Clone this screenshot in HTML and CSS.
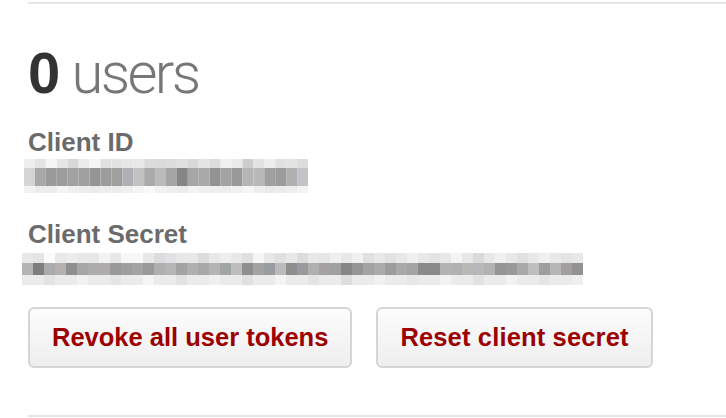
FILE: index.html
```html
<!DOCTYPE html>
<html>
<head>
<meta charset="utf-8">
<link rel="stylesheet" href="styles.css">
</head>
<body>
<div class="page">
  <div class="rule"></div>
  <h2 class="count"><span class="num">0</span> <span class="unit">users</span></h2>
  <dl class="creds">
    <dt class="label label-id">Client ID</dt>
    <dd class="blur blur-id">
      <svg width="284" height="34" viewBox="0 0 26 34" preserveAspectRatio="none">
        <g>
          <rect x="0" y="0" width="1" height="9" fill="#eeeeee"/><rect x="1" y="0" width="1" height="9" fill="#e3e3e3"/><rect x="2" y="0" width="1" height="9" fill="#f5f5f5"/><rect x="3" y="0" width="1" height="9" fill="#e5e5e5"/><rect x="4" y="0" width="1" height="9" fill="#d8d8d8"/><rect x="5" y="0" width="1" height="9" fill="#ebebeb"/><rect x="6" y="0" width="1" height="9" fill="#f5f5f5"/><rect x="7" y="0" width="1" height="9" fill="#e0e0e0"/><rect x="8" y="0" width="1" height="9" fill="#e2e2e2"/><rect x="9" y="0" width="1" height="9" fill="#e6e6e6"/><rect x="10" y="0" width="1" height="9" fill="#e8e8e8"/><rect x="11" y="0" width="1" height="9" fill="#dcdcdc"/><rect x="12" y="0" width="1" height="9" fill="#dadada"/><rect x="13" y="0" width="1" height="9" fill="#dcdcdc"/><rect x="14" y="0" width="1" height="9" fill="#e0e0e0"/><rect x="15" y="0" width="1" height="9" fill="#d9d9d9"/><rect x="16" y="0" width="1" height="9" fill="#e4e4e4"/><rect x="17" y="0" width="1" height="9" fill="#dcdcdc"/><rect x="18" y="0" width="1" height="9" fill="#f0f0f0"/><rect x="19" y="0" width="1" height="9" fill="#ebebeb"/><rect x="20" y="0" width="1" height="9" fill="#cdcdcd"/><rect x="21" y="0" width="1" height="9" fill="#e2e2e2"/><rect x="22" y="0" width="1" height="9" fill="#ededed"/><rect x="23" y="0" width="1" height="9" fill="#e0e0e0"/><rect x="24" y="0" width="1" height="9" fill="#e3e3e3"/><rect x="25" y="0" width="1" height="9" fill="#dddddd"/>
        </g>
        <g>
          <rect x="0" y="9" width="1" height="18" fill="#d5d5d5"/><rect x="1" y="9" width="1" height="18" fill="#a8a8a8"/><rect x="2" y="9" width="1" height="18" fill="#9a9a9a"/><rect x="3" y="9" width="1" height="18" fill="#9d9d9d"/><rect x="4" y="9" width="1" height="18" fill="#a2a2a2"/><rect x="5" y="9" width="1" height="18" fill="#a0a0a0"/><rect x="6" y="9" width="1" height="18" fill="#959595"/><rect x="7" y="9" width="1" height="18" fill="#9d9d9d"/><rect x="8" y="9" width="1" height="18" fill="#9f9f9f"/><rect x="9" y="9" width="1" height="18" fill="#b0b0b4"/><rect x="10" y="9" width="1" height="18" fill="#c2c2c2"/><rect x="11" y="9" width="1" height="18" fill="#aaaaaa"/><rect x="12" y="9" width="1" height="18" fill="#bbbbbb"/><rect x="13" y="9" width="1" height="18" fill="#a5a5a5"/><rect x="14" y="9" width="1" height="18" fill="#868686"/><rect x="15" y="9" width="1" height="18" fill="#a7a7a7"/><rect x="16" y="9" width="1" height="18" fill="#a9a9a9"/><rect x="17" y="9" width="1" height="18" fill="#939393"/><rect x="18" y="9" width="1" height="18" fill="#a3a3a3"/><rect x="19" y="9" width="1" height="18" fill="#999999"/><rect x="20" y="9" width="1" height="18" fill="#b5b5b8"/><rect x="21" y="9" width="1" height="18" fill="#b9b9b9"/><rect x="22" y="9" width="1" height="18" fill="#a0a0a0"/><rect x="23" y="9" width="1" height="18" fill="#9c9c9c"/><rect x="24" y="9" width="1" height="18" fill="#b0b0b0"/><rect x="25" y="9" width="1" height="18" fill="#c3c3c8"/>
        </g>
        <g>
          <rect x="0" y="27" width="1" height="7" fill="#f2f2f2"/><rect x="1" y="27" width="1" height="7" fill="#ececec"/><rect x="2" y="27" width="1" height="7" fill="#ececec"/><rect x="3" y="27" width="1" height="7" fill="#f5f5f5"/><rect x="4" y="27" width="1" height="7" fill="#efefef"/><rect x="5" y="27" width="1" height="7" fill="#ededed"/><rect x="6" y="27" width="1" height="7" fill="#eaeaea"/><rect x="7" y="27" width="1" height="7" fill="#ededed"/><rect x="8" y="27" width="1" height="7" fill="#ececec"/><rect x="9" y="27" width="1" height="7" fill="#f0f0f0"/><rect x="10" y="27" width="1" height="7" fill="#f4f4f4"/><rect x="11" y="27" width="1" height="7" fill="#fafafa"/><rect x="12" y="27" width="1" height="7" fill="#f1f1f1"/><rect x="13" y="27" width="1" height="7" fill="#eeeeee"/><rect x="14" y="27" width="1" height="7" fill="#ececec"/><rect x="15" y="27" width="1" height="7" fill="#f3f3f3"/><rect x="16" y="27" width="1" height="7" fill="#efefef"/><rect x="17" y="27" width="1" height="7" fill="#eeeeee"/><rect x="18" y="27" width="1" height="7" fill="#ededed"/><rect x="19" y="27" width="1" height="7" fill="#f0f0f0"/><rect x="20" y="27" width="1" height="7" fill="#f6f6f6"/><rect x="21" y="27" width="1" height="7" fill="#eeeeee"/><rect x="22" y="27" width="1" height="7" fill="#eaeaea"/><rect x="23" y="27" width="1" height="7" fill="#ececec"/><rect x="24" y="27" width="1" height="7" fill="#eeeeee"/><rect x="25" y="27" width="1" height="7" fill="#f3f3f3"/>
        </g>
      </svg>
    </dd>
    <dt class="label label-secret">Client Secret</dt>
    <dd class="blur blur-secret">
      <svg width="561" height="32" viewBox="0 0 51 32" preserveAspectRatio="none">
        <g>
          <rect x="0" y="0" width="51" height="10" fill="#e8e8e8"/>
          <rect x="1" y="0" width="1" height="10" fill="#e4e4e4"/><rect x="2" y="0" width="1" height="10" fill="#fbfbfb"/><rect x="4" y="0" width="1" height="10" fill="#ececec"/><rect x="7" y="0" width="1" height="10" fill="#f2f2f2"/><rect x="9" y="0" width="1" height="10" fill="#f7f7f7"/><rect x="10" y="0" width="1" height="10" fill="#f7f7f7"/><rect x="12" y="0" width="1" height="10" fill="#dcdcdc"/><rect x="13" y="0" width="1" height="10" fill="#e2e2e6"/><rect x="16" y="0" width="1" height="10" fill="#dcdcdc"/><rect x="18" y="0" width="1" height="10" fill="#eeeeee"/><rect x="20" y="0" width="1" height="10" fill="#e0e0e0"/><rect x="21" y="0" width="1" height="10" fill="#f5f5f5"/><rect x="23" y="0" width="1" height="10" fill="#e0e0e0"/><rect x="25" y="0" width="1" height="10" fill="#dcdcdc"/><rect x="27" y="0" width="1" height="10" fill="#e6e6e6"/><rect x="28" y="0" width="1" height="10" fill="#efefef"/><rect x="30" y="0" width="1" height="10" fill="#f0f0f0"/><rect x="31" y="0" width="1" height="10" fill="#e0e0e0"/><rect x="33" y="0" width="1" height="10" fill="#e2e2e2"/><rect x="35" y="0" width="1" height="10" fill="#f0f0f0"/><rect x="37" y="0" width="1" height="10" fill="#e3e3e3"/><rect x="39" y="0" width="1" height="10" fill="#f4f4f4"/><rect x="41" y="0" width="1" height="10" fill="#dadada"/><rect x="43" y="0" width="1" height="10" fill="#f0f0f0"/><rect x="45" y="0" width="1" height="10" fill="#e0e0e0"/><rect x="47" y="0" width="1" height="10" fill="#efefef"/><rect x="49" y="0" width="1" height="10" fill="#e4e4e4"/>
        </g>
        <g>
          <rect x="0" y="10" width="1" height="12" fill="#b4b4b4"/><rect x="1" y="10" width="1" height="12" fill="#7e7e7e"/><rect x="2" y="10" width="1" height="12" fill="#aaaaaf"/><rect x="3" y="10" width="1" height="12" fill="#b5b0b0"/><rect x="4" y="10" width="1" height="12" fill="#8e8e8e"/><rect x="5" y="10" width="1" height="12" fill="#a6a6a6"/><rect x="6" y="10" width="1" height="12" fill="#acacac"/><rect x="7" y="10" width="1" height="12" fill="#b0acac"/><rect x="8" y="10" width="1" height="12" fill="#999999"/><rect x="9" y="10" width="1" height="12" fill="#9e9e9e"/><rect x="10" y="10" width="1" height="12" fill="#a4a4a4"/><rect x="11" y="10" width="1" height="12" fill="#9a9a9a"/><rect x="12" y="10" width="1" height="12" fill="#afafaf"/><rect x="13" y="10" width="1" height="12" fill="#b5b5b5"/><rect x="14" y="10" width="1" height="12" fill="#a3a3a3"/><rect x="15" y="10" width="1" height="12" fill="#b0b0b0"/><rect x="16" y="10" width="1" height="12" fill="#a8a8a8"/><rect x="17" y="10" width="1" height="12" fill="#b4b4b4"/><rect x="18" y="10" width="1" height="12" fill="#a1a5a5"/><rect x="19" y="10" width="1" height="12" fill="#bdbdbd"/><rect x="20" y="10" width="1" height="12" fill="#8f8f8f"/><rect x="21" y="10" width="1" height="12" fill="#a3a3a3"/><rect x="22" y="10" width="1" height="12" fill="#989ca0"/><rect x="23" y="10" width="1" height="12" fill="#bbbbbb"/><rect x="24" y="10" width="1" height="12" fill="#8e8e8e"/><rect x="25" y="10" width="1" height="12" fill="#9a9a9e"/><rect x="26" y="10" width="1" height="12" fill="#b0b0b0"/><rect x="27" y="10" width="1" height="12" fill="#a6a2a2"/><rect x="28" y="10" width="1" height="12" fill="#a0a0a0"/><rect x="29" y="10" width="1" height="12" fill="#858585"/><rect x="30" y="10" width="1" height="12" fill="#959595"/><rect x="31" y="10" width="1" height="12" fill="#a3a3a3"/><rect x="32" y="10" width="1" height="12" fill="#aaaaaa"/><rect x="33" y="10" width="1" height="12" fill="#9c9c9c"/><rect x="34" y="10" width="1" height="12" fill="#a9a9a9"/><rect x="35" y="10" width="1" height="12" fill="#a4a4a4"/><rect x="36" y="10" width="1" height="12" fill="#8a8a8a"/><rect x="37" y="10" width="1" height="12" fill="#8a8a8a"/><rect x="38" y="10" width="1" height="12" fill="#b3b3b3"/><rect x="39" y="10" width="1" height="12" fill="#b1b1b1"/><rect x="40" y="10" width="1" height="12" fill="#b9b9b6"/><rect x="41" y="10" width="1" height="12" fill="#b8b8bc"/><rect x="42" y="10" width="1" height="12" fill="#b2b2b2"/><rect x="43" y="10" width="1" height="12" fill="#959595"/><rect x="44" y="10" width="1" height="12" fill="#999999"/><rect x="45" y="10" width="1" height="12" fill="#a9a9a9"/><rect x="46" y="10" width="1" height="12" fill="#bebebe"/><rect x="47" y="10" width="1" height="12" fill="#9e9e9e"/><rect x="48" y="10" width="1" height="12" fill="#b6b6b6"/><rect x="49" y="10" width="1" height="12" fill="#a49f9f"/><rect x="50" y="10" width="1" height="12" fill="#929292"/>
        </g>
        <g>
          <rect x="0" y="22" width="51" height="10" fill="#ebebeb"/>
          <rect x="2" y="22" width="1" height="10" fill="#e3e3e3"/><rect x="5" y="22" width="1" height="10" fill="#f2f2f2"/><rect x="8" y="22" width="1" height="10" fill="#e5e5e5"/><rect x="11" y="22" width="1" height="10" fill="#f5f5f5"/><rect x="14" y="22" width="1" height="10" fill="#e2e2e2"/><rect x="17" y="22" width="1" height="10" fill="#f0f0f0"/><rect x="20" y="22" width="1" height="10" fill="#e0e0e0"/><rect x="23" y="22" width="1" height="10" fill="#f4f4f4"/><rect x="26" y="22" width="1" height="10" fill="#e4e4e4"/><rect x="29" y="22" width="1" height="10" fill="#dedede"/><rect x="32" y="22" width="1" height="10" fill="#f1f1f1"/><rect x="35" y="22" width="1" height="10" fill="#e6e6e6"/><rect x="38" y="22" width="1" height="10" fill="#f3f3f3"/><rect x="41" y="22" width="1" height="10" fill="#e1e1e1"/><rect x="44" y="22" width="1" height="10" fill="#f2f2f2"/><rect x="47" y="22" width="1" height="10" fill="#e5e5e5"/><rect x="50" y="22" width="1" height="10" fill="#efefef"/>
        </g>
      </svg>
    </dd>
  </dl>
  <div class="actions">
    <button class="btn btn-danger btn-revoke">Revoke all user tokens</button>
    <button class="btn btn-danger btn-reset">Reset client secret</button>
  </div>
  <div class="rule rule-bottom"></div>
</div>
</body>
</html>
```

FILE: styles.css
```css
html, body {
  margin: 0;
  padding: 0;
  background: #ffffff;
}

body {
  font-family: "Liberation Sans", Arial, Helvetica, sans-serif;
  overflow: hidden;
}

.page {
  padding-left: 28px;
}

.rule {
  height: 2px;
  background: #e5e5e5;
  margin-top: 2px;
}

.count {
  margin: 40px 0 0 0;
  font-size: 58px;
  line-height: 58px;
  height: 58px;
  font-weight: normal;
  white-space: nowrap;
  word-spacing: -5px;
}

.num {
  font-weight: bold;
  color: #333333;
}

.unit {
  font-family: Roboto, "Liberation Sans", sans-serif;
  font-weight: 300;
  color: #777777;
  letter-spacing: -2.6px;
  word-spacing: 0;
}

.creds {
  margin: 0;
  padding: 0;
}

.label {
  font-size: 26px;
  line-height: 26px;
  font-weight: bold;
  color: #6b6b6b;
  margin: 0;
}

.label-id {
  margin-top: 27px;
}

.label-secret {
  margin-top: 28px;
}

.blur {
  margin: 0;
  line-height: 0;
}

.blur svg {
  display: block;
}

.blur-id {
  margin-top: 4px;
  margin-left: -4px;
}

.blur-secret {
  margin-top: 6px;
  margin-left: -6px;
}

.actions {
  display: flex;
  gap: 24px;
  margin-top: 22px;
}

.btn {
  font-family: "Liberation Sans", Arial, Helvetica, sans-serif;
  font-size: 25.5px;
  line-height: 25px;
  font-weight: bold;
  padding: 16px 22px;
  border: 2px solid #d5d5d5;
  border-radius: 6px;
  background: linear-gradient(#fcfcfc, #eeeeee);
  cursor: pointer;
}

.btn-reset {
  letter-spacing: 0.15px;
}

.btn-danger {
  color: #9c0000;
}

.rule-bottom {
  margin-top: 47px;
}
```
